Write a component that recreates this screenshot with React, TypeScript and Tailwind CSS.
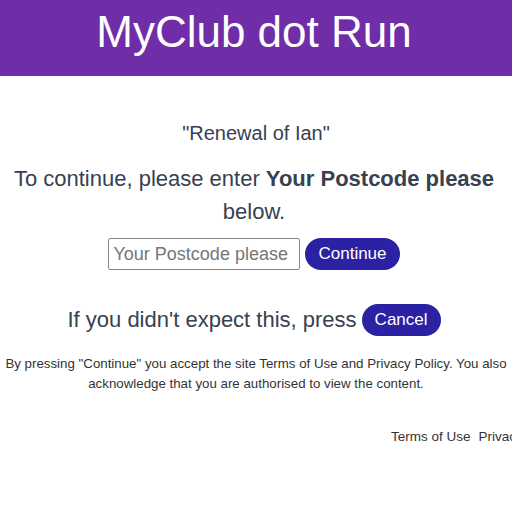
export default function App() {
  return (
    <div className="w-[512px] h-[512px] overflow-hidden bg-white" style={{ fontFamily: '"Liberation Sans", Arial, sans-serif' }}>
      <header className="h-[76px] bg-[#6f2da8] flex justify-center">
        <h1 className="text-white text-[44px] leading-none pt-[10px] pr-[4px]">MyClub dot Run</h1>
      </header>
      <main className="text-[#374151] text-center">
        <p className="text-[20px] leading-[24px] mt-[45px]">"Renewal of Ian"</p>
        <p className="text-[22px] leading-[33px] mt-[17px] px-2 pr-[12px]">
          To continue, please enter <b>Your Postcode please</b> below.
        </p>
        <div className="flex justify-center gap-[5px] mt-[10px] pr-[4px]">
          <input
            className="w-[192px] h-[32px] border border-[#888] rounded-[2px] px-[4px] text-[18px] text-[#333] placeholder:text-[#767676]"
            placeholder="Your Postcode please"
          />
          <button className="h-[32px] px-[13px] rounded-full bg-[#2b22a3] text-white text-[17px]">Continue</button>
        </div>
        <div className="flex justify-center items-center gap-[5px] mt-[33px] pr-[4px]">
          <span className="text-[22px]">If you didn't expect this, press</span>
          <button className="h-[32px] px-[13px] rounded-full bg-[#2b22a3] text-white text-[17px]">Cancel</button>
        </div>
        <p className="text-[13.3px] leading-[20px] mt-[18px] px-[4px] text-[#333]">
          By pressing "Continue" you accept the site Terms of Use and Privacy Policy. You also acknowledge that you are authorised to view the content.
        </p>
      </main>
      <footer className="flex gap-[8px] whitespace-nowrap pl-[391px] mt-[33px] text-[13.5px] text-[#333]">
        <span>Terms of Use</span>
        <span>Privacy Policy</span>
      </footer>
    </div>
  );
}
